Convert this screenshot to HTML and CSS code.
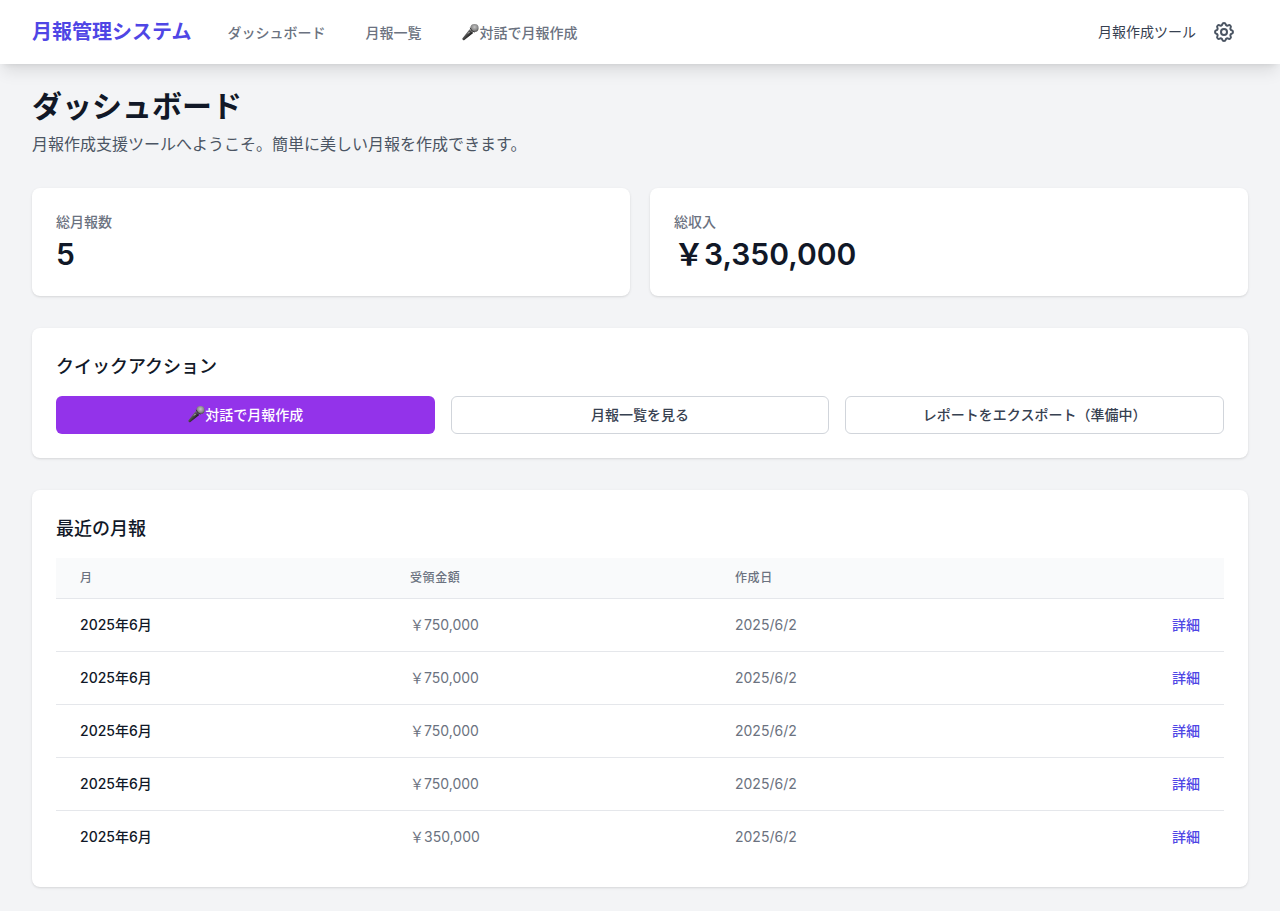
FILE: index.html
```html
<!DOCTYPE html>
<html lang="ja">
<head>
<meta charset="utf-8">
<title>月報管理システム</title>
<link rel="stylesheet" href="styles.css">
</head>
<body>
<svg width="0" height="0" class="defs">
  <defs>
    <linearGradient id="handle" x1="0" y1="0" x2="1" y2="1"><stop offset=".3" stop-color="#7a7a7a"/><stop offset=".65" stop-color="#1c1c1c"/></linearGradient>
    <radialGradient id="head" cx=".5" cy=".4" r=".65"><stop offset="0" stop-color="#c4c4c4"/><stop offset=".6" stop-color="#8a8a8a"/><stop offset="1" stop-color="#444"/></radialGradient>
  </defs>
  <symbol id="mic" viewBox="0 0 18 18">
    <path d="M1.5 15.2 8.6 6.2l3.6 3.8L3.4 17q-.7.5-1.3 0l-.6-.6q-.5-.6 0-1.2z" fill="url(#handle)"/>
    <ellipse cx="13.5" cy="4.9" rx="4.1" ry="4" fill="url(#head)"/>
    <path d="M9.2 4.8q.8 3.4 4.4 4.4" stroke="#3a3a3a" stroke-width="1" fill="none"/>
    <path d="M7.2 10.4l1.1-1.2" stroke="#ddd" stroke-width="1"/>
  </symbol>
</svg>
<header class="navbar">
  <a class="brand">月報管理システム</a>
  <nav class="nav-links">
    <a>ダッシュボード</a>
    <a>月報一覧</a>
    <a class="with-icon"><svg class="mic"><use href="#mic"/></svg>対話で月報作成</a>
  </nav>
  <span class="tool-name">月報作成ツール</span>
  <button class="settings" aria-label="設定"><svg viewBox="0 0 24 24" fill="none" stroke="currentColor" stroke-width="2" stroke-linecap="round" stroke-linejoin="round"><path d="M10.325 4.317c.426-1.756 2.924-1.756 3.35 0a1.724 1.724 0 002.573 1.066c1.543-.94 3.31.826 2.37 2.37a1.724 1.724 0 001.065 2.572c1.756.426 1.756 2.924 0 3.35a1.724 1.724 0 00-1.066 2.573c.94 1.543-.826 3.31-2.37 2.37a1.724 1.724 0 00-2.572 1.065c-.426 1.756-2.924 1.756-3.35 0a1.724 1.724 0 00-2.573-1.066c-1.543.94-3.31-.826-2.37-2.37a1.724 1.724 0 00-1.065-2.572c-1.756-.426-1.756-2.924 0-3.35a1.724 1.724 0 001.066-2.573c-.94-1.543.826-3.31 2.37-2.37.996.608 2.296.07 2.572-1.065z"/><path d="M15 12a3 3 0 11-6 0 3 3 0 016 0z"/></svg></button>
</header>
<main class="content">
  <h1 class="page-title">ダッシュボード</h1>
  <p class="subtitle">月報作成支援ツールへようこそ。簡単に美しい月報を作成できます。</p>
  <section class="stats">
    <div class="card"><div class="stat-label">総月報数</div><div class="stat-value">5</div></div>
    <div class="card"><div class="stat-label">総収入</div><div class="stat-value">￥3,350,000</div></div>
  </section>
  <section class="card actions">
    <h2 class="card-title">クイックアクション</h2>
    <div class="buttons">
      <button class="btn primary"><svg class="mic"><use href="#mic"/></svg>対話で月報作成</button>
      <button class="btn">月報一覧を見る</button>
      <button class="btn">レポートをエクスポート（準備中）</button>
    </div>
  </section>
  <section class="card recent">
    <h2 class="card-title">最近の月報</h2>
    <table class="reports">
      <thead><tr><th class="col-month">月</th><th class="col-amount">受領金額</th><th class="col-date">作成日</th><th></th></tr></thead>
      <tbody>
        <tr><td class="month">2025年6月</td><td>￥750,000</td><td>2025/6/2</td><td class="detail">詳細</td></tr>
        <tr><td class="month">2025年6月</td><td>￥750,000</td><td>2025/6/2</td><td class="detail">詳細</td></tr>
        <tr><td class="month">2025年6月</td><td>￥750,000</td><td>2025/6/2</td><td class="detail">詳細</td></tr>
        <tr><td class="month">2025年6月</td><td>￥750,000</td><td>2025/6/2</td><td class="detail">詳細</td></tr>
        <tr><td class="month">2025年6月</td><td>￥350,000</td><td>2025/6/2</td><td class="detail">詳細</td></tr>
      </tbody>
    </table>
  </section>
</main>
</body>
</html>
```
FILE: styles.css
```css
* { box-sizing: border-box; margin: 0; padding: 0; }
body { background: #f3f4f6; color: #111827; font: 16px/24px Inter, "Noto Sans CJK JP", sans-serif; -webkit-font-smoothing: antialiased; }
button { font: inherit; background: none; border: 0; }
.defs { display: block; }
.navbar { display: flex; align-items: center; height: 64px; padding: 0 32px; background: #fff; box-shadow: 0 10px 15px -3px rgba(0,0,0,.1), 0 4px 6px -4px rgba(0,0,0,.1); }
.brand { color: #4f46e5; font-size: 20px; line-height: 28px; font-weight: 700; }
.nav-links { display: flex; gap: 40px; margin-left: 36px; padding-top: 2px; color: #6b7280; font-size: 14px; font-weight: 500; line-height: 20px; }
.with-icon, .btn { display: flex; align-items: center; }
.mic { width: 18px; height: 18px; flex: none; margin-top: -2px; }
.tool-name { margin-left: auto; font-size: 14px; line-height: 20px; color: #374151; }
.settings { display: flex; margin-left: 16px; margin-right: 12px; color: #4b5563; }
.settings svg { width: 24px; height: 24px; }
.content { padding: 24px 32px; }
.page-title { font-size: 30px; line-height: 36px; font-weight: 700; }
.subtitle { margin-top: 8px; color: #4b5563; }
.stats { display: grid; grid-template-columns: 1fr 1fr; gap: 20px; margin-top: 32px; }
.card { background: #fff; border-radius: 8px; padding: 24px; box-shadow: 0 1px 3px rgba(0,0,0,.1), 0 1px 2px -1px rgba(0,0,0,.1); }
.stat-label { font-size: 14px; line-height: 20px; font-weight: 500; color: #6b7280; }
.stat-value { margin-top: 4px; font-size: 30px; line-height: 36px; font-weight: 600; }
.actions, .recent { margin-top: 32px; }
.card-title { padding-top: 1px; font-size: 18px; line-height: 28px; font-weight: 500; margin-bottom: 15px; }
.buttons { display: grid; grid-template-columns: repeat(3, 1fr); gap: 16px; }
.btn { justify-content: center; height: 38px; border: 1px solid #d1d5db; border-radius: 6px; color: #374151; font-size: 14px; line-height: 20px; font-weight: 500; }
.primary { background: #9333ea; border-color: transparent; color: #fff; }
.reports { width: 100%; border-collapse: collapse; table-layout: fixed; font-size: 14px; line-height: 20px; }
.reports th { height: 40px; padding: 0 24px; background: #f9fafb; text-align: left; font-size: 12px; line-height: 16px; font-weight: 500; letter-spacing: .6px; color: #6b7280; }
.reports td { height: 53px; padding: 16px 24px; border-top: 1px solid #e5e7eb; color: #6b7280; }
.col-month { width: 330px; }
.col-amount { width: 325px; }
.col-date { width: 325px; }
.reports .month { color: #111827; font-weight: 500; }
.reports .detail { color: #4f46e5; font-weight: 500; text-align: right; }
```
